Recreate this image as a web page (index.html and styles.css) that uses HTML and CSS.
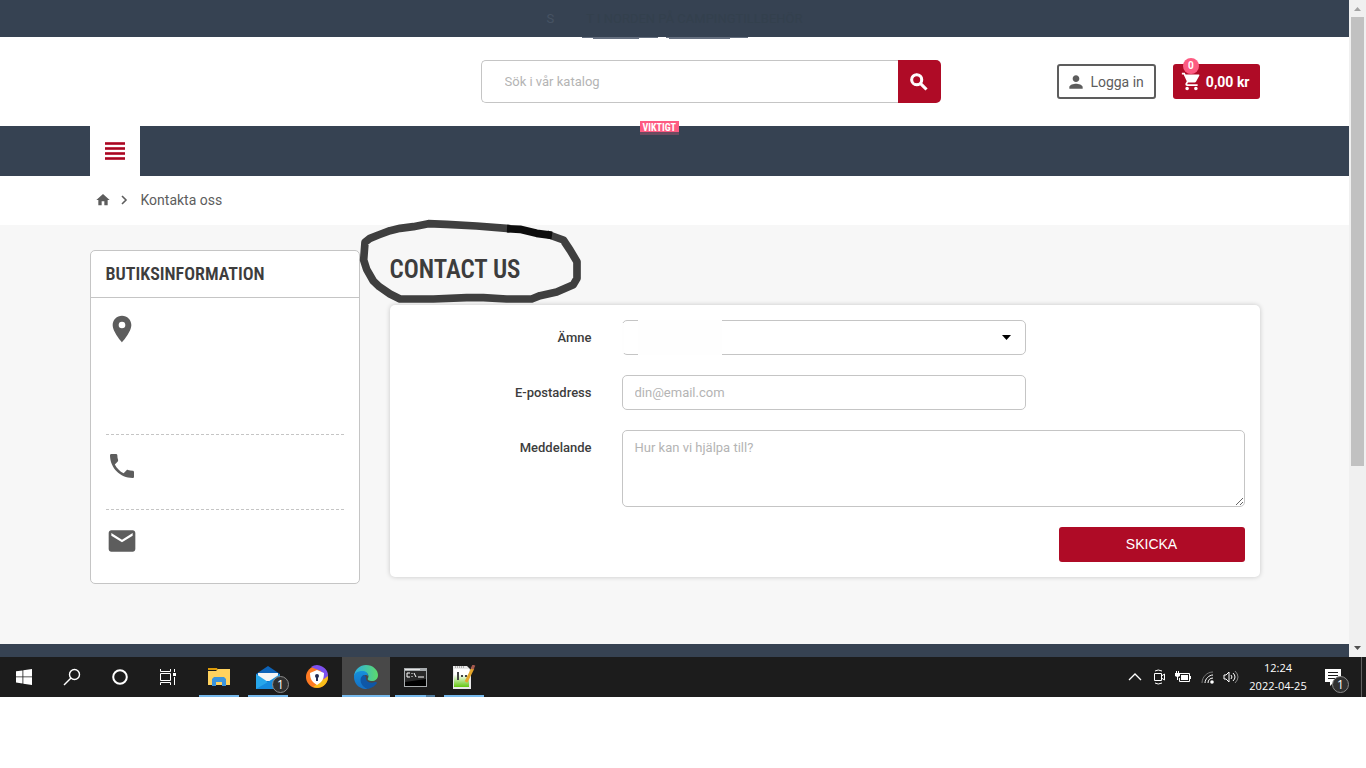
FILE: index.html
```html
<!DOCTYPE html>
<html lang="sv">
  <head>
    <meta charset="UTF-8" />
    <meta name="viewport" content="width=device-width, initial-scale=1.0" />
    <title>Kontakta oss</title>
    <link rel="stylesheet" href="styles.css">
  </head>
  <body>
    <div class="browser">
      <div class="page">
        <div class="banner">
          <span class="banner-first">S</span>
          <span class="banner-text">T I NORDEN PÅ CAMPINGTILLBEHÖR</span>
          <svg class="banner-marks" width="166" height="2" viewBox="0 0 166 2">
            <path d="M0 0h76v1H57v1H11V1H0zM84 0h82v1h-18v1H87V1h-3z" fill="#667080" />
          </svg>
        </div>

        <header class="header">
          <div class="container header-row">
            <form class="search">
              <input class="search-input" type="text" placeholder="Sök i vår katalog" aria-label="Sök" />
              <button class="search-button" type="button" aria-label="Sök">
                <svg width="22" height="22" viewBox="0 0 24 24">
                  <path d="M15.500 14h-.79l-.28-.27A6.470 6.470 0 0 0 16 9.500 6.500 6.500 0 1 0 9.500 16c1.610 0 3.090-.59 4.230-1.570l.27.28v.79l5 4.990L20.490 19l-4.990-5zm-6 0a4.500 4.500 0 1 1 0-9 4.500 4.500 0 0 1 0 9z" fill="#fff" stroke="#fff" stroke-width="1.300" />
                </svg>
              </button>
            </form>
            <div class="actions">
              <a class="login" href="#">
                <svg width="20" height="20" viewBox="0 0 24 24">
                  <path d="M12 12c2.210 0 4-1.790 4-4s-1.790-4-4-4-4 1.790-4 4 1.790 4 4 4zm0 2c-2.670 0-8 1.340-8 4v2h16v-2c0-2.660-5.330-4-8-4z" fill="#5d5d5d" />
                </svg>
                Logga in
              </a>
              <a class="cart" href="#">
                <svg width="21" height="21" viewBox="0 0 24 24">
                  <path d="M7 18c-1.100 0-1.990.9-1.990 2S5.900 22 7 22s2-.9 2-2-.9-2-2-2zM1 2v2h2l3.600 7.590-1.350 2.450c-.16.28-.25.61-.25.96 0 1.100.9 2 2 2h12v-2H7.420c-.14 0-.25-.11-.25-.25l.03-.12.9-1.630h7.450c.75 0 1.410-.41 1.750-1.030l3.580-6.490A1 1 0 0 0 20 4H5.210l-.94-2H1zm16 16c-1.100 0-1.990.9-1.990 2s.89 2 1.990 2 2-.9 2-2-.9-2-2-2z" fill="#fff" />
                </svg>
                0,00 kr
                <span class="cart-count">0</span>
              </a>
            </div>
          </div>
        </header>

        <nav class="nav">
          <div class="container nav-row">
            <button class="menu-button" type="button" aria-label="Meny">
              <svg width="22" height="20" viewBox="0 0 22 20">
                <path d="M1 1h20v3H1zM1 6h20v3H1zM1 11h20v3H1zM1 16h20v3H1z" fill="#c0334b" />
                <path d="M1 2h20v1H1zM1 7h20v1H1zM1 12h20v1H1zM1 17h20v1H1z" fill="#a40822" />
              </svg>
            </button>
            <span class="nav-label">VIKTIGT</span>
          </div>
        </nav>

        <div class="breadcrumb">
          <div class="container breadcrumb-row">
            <a class="home" href="#" aria-label="Hem">
              <svg width="16" height="16" viewBox="0 0 24 24">
                <path d="M10 20v-6h4v6h5v-8h3L12 3 2 12h3v8z" fill="#5d5d5d" />
              </svg>
            </a>
            <svg width="7" height="10" viewBox="0 0 7 10">
              <path d="M1 1l4 4-4 4" fill="none" stroke="#5d5d5d" stroke-width="1.600" />
            </svg>
            <span class="crumb">Kontakta oss</span>
          </div>
        </div>

        <main class="main">
          <div class="container columns">
            <aside class="store">
              <h2 class="store-title">Butiksinformation</h2>
              <div class="store-list">
                <div class="store-item store-address">
                  <svg width="32" height="32" viewBox="0 0 24 24">
                    <path d="M12 2C8.130 2 5 5.130 5 9c0 5.250 7 13 7 13s7-7.750 7-13c0-3.870-3.130-7-7-7zm0 9.500a2.500 2.500 0 1 1 0-5 2.500 2.500 0 0 1 0 5z" fill="#5d5d5d" />
                  </svg>
                </div>
                <div class="store-item">
                  <svg width="32" height="32" viewBox="0 0 24 24">
                    <path d="M6.620 10.790c1.440 2.830 3.760 5.140 6.590 6.590l2.200-2.200c.27-.27.67-.36 1.020-.24 1.120.37 2.330.57 3.570.57.55 0 1 .45 1 1V20c0 .55-.45 1-1 1C10.610 21 3 13.390 3 4c0-.55.45-1 1-1h3.500c.55 0 1 .45 1 1 0 1.250.2 2.450.57 3.570.11.35.03.74-.25 1.020l-2.200 2.200z" fill="#5d5d5d" />
                  </svg>
                </div>
                <div class="store-item">
                  <svg width="32" height="32" viewBox="0 0 24 24">
                    <path d="M20 4H4c-1.100 0-1.990.9-1.990 2L2 18c0 1.100.9 2 2 2h16c1.100 0 2-.9 2-2V6c0-1.100-.9-2-2-2zm0 4l-8 5-8-5V6l8 5 8-5v2z" fill="#5d5d5d" />
                  </svg>
                </div>
              </div>
            </aside>

            <section class="contact">
              <div class="contact-head">
                <h1 class="contact-title">Contact us</h1>
                <svg class="pen-circle" width="260" height="110" viewBox="0 0 780 330">
                  <g fill="none" stroke-width="23" stroke-linejoin="round">
                    <path d="M480 56L380 48 290 43 235 41 190 50 150 55 120 62 85 75 60 85 45 97 41 150 50 178 70 213 88 230 120 252 150 267 250 267 350 263 400 263 470 267 545 267 570 257 620 246 670 224 681 205 681 155 660 120 640 90 590 72" stroke="#3f3f3f" />
                    <path d="M471 56L510 58 560 70 606 76" stroke="#0d0d0d" />
                  </g>
                </svg>
              </div>
              <form class="card">
                <div class="row">
                  <label for="subject">Ämne</label>
                  <div class="select-wrap">
                    <select class="field" id="subject"><option></option></select>
                    <svg class="caret" width="9" height="5" viewBox="0 0 9 5"><path d="M0 0h9L4.500 5z" fill="#000" /></svg>
                  </div>
                </div>
                <div class="row">
                  <label for="email">E-postadress</label>
                  <input class="field short" id="email" type="email" placeholder="din@email.com" />
                </div>
                <div class="row">
                  <label for="message">Meddelande</label>
                  <textarea class="field message" id="message" placeholder="Hur kan vi hjälpa till?"></textarea>
                </div>
                <button class="send" type="button">SKICKA</button>
              </form>
            </section>
          </div>
        </main>
        <footer class="footer"></footer>
      </div>

      <div class="scrollbar">
        <svg width="17" height="17" viewBox="0 0 17 17"><path d="M5 11h7L8.500 7z" fill="#a3a3a3" /></svg>
        <div class="track"><div class="thumb"></div></div>
        <svg width="17" height="17" viewBox="0 0 17 17"><path d="M5 6h7l-3.500 4z" fill="#505050" /></svg>
      </div>
    </div>

    <div class="taskbar">
      <div class="system-buttons">
        <button class="task" type="button" aria-label="Start">
          <svg width="16" height="16" viewBox="0 0 16 16"><path d="M0 2.300L6.500 1.400V7.500H0zM7.300 1.300L16 0v7.500H7.300zM0 8.300h6.500v6.200L0 13.600zM7.300 8.300H16V16l-8.700-1.300z" fill="#fff" /></svg>
        </button>
        <button class="task" type="button" aria-label="Sök">
          <svg width="18" height="18" viewBox="0 0 18 18"><g fill="none" stroke="#fff" stroke-width="1.400"><circle cx="11.500" cy="6.500" r="5" /><path d="M8 10L1 17" /></g></svg>
        </button>
        <button class="task" type="button" aria-label="Cortana">
          <svg width="18" height="18" viewBox="0 0 18 18"><circle cx="9" cy="9" r="6.800" fill="none" stroke="#fff" stroke-width="2" /></svg>
        </button>
        <button class="task" type="button" aria-label="Aktivitetsvy">
          <svg width="18" height="16" viewBox="0 0 18 16"><g fill="none" stroke="#fff"><path d="M1.500 0v2.500h10V0M1.500 16v-2.500h10V16M1.500 4.500h10v7h-10zM15.500 0v3M15.500 8v8" /></g><path d="M14 4h3v3h-3z" fill="#fff" /></svg>
        </button>
      </div>

      <div class="app-buttons">
        <button class="task running" type="button" aria-label="Utforskaren">
          <svg width="22" height="18" viewBox="0 0 22 18"><path d="M0 0h9l1 2H0z" fill="#dc9a08" /><path d="M0 3h8l2-2h12v16H0z" fill="#ffd25e" /><path d="M4 18v-7l2-2h10l2 2v7h-4v-4H8v4z" fill="#3b94dc" /></svg>
        </button>
        <button class="task running" type="button" aria-label="E-post">
          <svg width="24" height="23" viewBox="0 0 24 23"><path d="M0 8L12 0l12 8v15H0z" fill="#0d63b8" /><path d="M2 7h20v8H2z" fill="#f4f4f4" /><path d="M0 8l12 8L24 8v15H0z" fill="#27a6ea" /><path d="M0 23L24 9v14z" fill="#168bdd" /></svg>
          <span class="mail-count">1</span>
        </button>
        <button class="task" type="button" aria-label="VPN">
          <svg width="24" height="24" viewBox="0 0 24 24"><circle cx="12" cy="12" r="11" fill="#ff7a22" /><path d="M6 2a11 11 0 0 1 17 10l-4 3L16 6z" fill="#7c50ef" /><path d="M23 11A11 11 0 0 1 8 22l4-3 7-5z" fill="#f7bd19" /><path d="M5 8l7-3 7 3c0 6-2 9-7 12-5-3-7-6-7-12z" fill="#fff" /><circle cx="12" cy="11" r="2" fill="#252d54" /><path d="M11 11h2v5h-2z" fill="#252d54" /></svg>
        </button>
        <button class="task running active" type="button" aria-label="Edge">
          <svg width="24" height="24" viewBox="0 0 24 24">
            <defs>
              <linearGradient id="edgeTop"><stop stop-color="#2baee5" /><stop offset="1" stop-color="#5ddb6b" /></linearGradient>
              <linearGradient id="edgeLeft" x2="0" y2="1"><stop stop-color="#1690dc" /><stop offset="1" stop-color="#146fc4" /></linearGradient>
            </defs>
            <path d="M0 11C1 4 6 0 12 0c7 0 12 5 12 10 0 4-3 6-6 6-3 0-5-1-4-3 1-1 1-6-5-6-4 0-7 2-9 4z" fill="url(#edgeTop)" />
            <path d="M0 12c0-4 4-6 8-6 4 0 6 2 6 5-1-1-5-2-6 2-1 5 2 9 6 11C6 25 0 19 0 12z" fill="url(#edgeLeft)" />
            <path d="M10 10c-5 1-5 11 4 14 4-1 7-3 9-6 0-1-1-1-2-1-5 2-10-1-9-5z" fill="#0f57a6" />
          </svg>
        </button>
        <button class="task running grouped" type="button" aria-label="Kommandotolken">
          <svg width="23" height="19" viewBox="0 0 23 19"><path d="M0 0h23v19H0z" fill="#a8acae" /><path d="M1 3h21v15H1z" fill="#000" /><path d="M1 1h15v1H1z" fill="#e5e5e5" /><path d="M1 3h21v8L1 14z" fill="#292929" /><path d="M6 5H3v4h3M8 5v1M8 8v1M10 5l2 4M14 9h6" fill="none" stroke="#fff" /></svg>
        </button>
        <button class="task running" type="button" aria-label="Notepad++">
          <svg width="24" height="24" viewBox="0 0 24 24"><defs><linearGradient id="padFill" x2="0" y2="1"><stop offset="0.300" stop-color="#fff" /><stop offset="1" stop-color="#64c810" /></linearGradient></defs><path d="M1 1h14l4 4v19H1z" fill="#e8e8e8" /><path d="M2 4h15v18H2z" fill="url(#padFill)" /><path d="M3 2h10" stroke="#777" stroke-dasharray="1 1" /><path d="M5 7h2v8H5zM9 10h2v2H9zM13 10h2v2h-2z" fill="#444" /><path d="M14 17L21 3" stroke="#e4a52b" stroke-width="3" /><path d="M20 4l2-4" stroke="#a45a50" stroke-width="3" /></svg>
        </button>
      </div>

      <div class="tray">
        <span class="tray-icon"><svg width="14" height="8" viewBox="0 0 14 8"><path d="M1 7l6-6 6 6" fill="none" stroke="#fff" stroke-width="1.300" /></svg></span>
        <span class="tray-icon"><svg width="13" height="16" viewBox="0 0 13 16"><path d="M1.500 4.500h7v7h-7zM8.500 7l3-2v6l-3-2M2 2Q5 0 9 2M2 14q3 2 7 0" fill="none" stroke="#fff" /></svg></span>
        <span class="tray-icon"><svg width="16" height="12" viewBox="0 0 16 12"><path d="M5 2.500h9.500v8H4.500V7" fill="none" stroke="#fff" /><path d="M6 4h7v5H6zM15 5h1v3h-1zM0 2h5v3L3 6v3H2V6L0 5zM1 0h1v2H1zM3 0h1v2H3z" fill="#fff" /></svg></span>
        <span class="tray-icon"><svg width="13" height="13" viewBox="0 0 13 13"><g fill="none" stroke="#fff"><path d="M1 12C1 6 6 1 12 1" stroke="#777" /><path d="M4 12c0-4 4-8 8-8M7 12c0-3 2-5 5-5" /></g><circle cx="11" cy="11" r="1.800" fill="#fff" /></svg></span>
        <span class="tray-icon"><svg width="16" height="14" viewBox="0 0 16 14"><g fill="none" stroke="#fff"><path d="M1 5h2l3-3v10L3 9H1zM8 5q2 2 0 4M10 3q4 4 0 8" /><path d="M12 1q6 6 0 12" stroke="#888" /></g></svg></span>
        <div class="clock">
          <time>12:24</time>
          <time>2022-04-25</time>
        </div>
        <button class="notices" type="button" aria-label="Meddelanden">
          <svg width="16" height="17" viewBox="0 0 16 17"><path d="M0 0h16v13H9l-4 4v-4H0z" fill="#fff" /><path d="M3 3.500h10M3 6.500h10M3 9.500h7" stroke="#1c1c1c" /></svg>
          <span class="notice-count">1</span>
        </button>
      </div>
    </div>
  </body>
</html>
```
FILE: styles.css
```css
* {
  margin: 0;
  padding: 0;
  box-sizing: border-box;
}

body {
  font-family: Roboto, "Liberation Sans", sans-serif;
  font-size: 14px;
  line-height: 20px;
  color: #5d5d5d;
  background-color: #fff;
}
button {
  border: none;
  cursor: pointer;
}
a {
  color: inherit;
  text-decoration: none;
}
svg {
  display: block;
  flex-shrink: 0;
}
.browser {
  display: flex;
}
.page {
  flex: 1;
  min-width: 0;
}
.container {
  max-width: 1170px;
  margin: 0 auto;
}

/* top of the page */
.banner {
  position: relative;
  display: flex;
  justify-content: center;
  align-items: center;
  gap: 32px;
  height: 37px;
  font-size: 13px;
  background-color: #364252;
}
.banner-first {
  color: #465363;
}
.banner-text {
  color: #33404d;
}
.banner-marks {
  position: absolute;
  top: 100%;
  left: 582px;
}
.header {
  padding: 23px 0;
}
.header-row {
  display: grid;
  grid-template-columns: 460px auto;
  justify-content: space-between;
  align-items: center;
  padding-left: 391px;
}
.search {
  display: flex;
  height: 43px;
}
.search-input {
  flex: 1;
  min-width: 0;
  padding: 0 23px;
  border: 1px solid #c5c5c5;
  border-right: none;
  border-radius: 5px 0 0 5px;
  font: 13px Roboto, sans-serif;
}
::placeholder {
  color: #b4b4b4;
}
.search-button {
  display: flex;
  justify-content: center;
  align-items: center;
  width: 43px;
  border-radius: 0 5px 5px 0;
  background-color: #af0b26;
}
.actions {
  display: flex;
  gap: 17px;
}
.login,
.cart {
  display: flex;
  align-items: center;
  height: 35px;
  border-radius: 3px;
}
.login {
  gap: 4px;
  padding: 0 10px 0 7px;
  border: 2px solid #5d5d5d;
}
.cart {
  position: relative;
  gap: 4px;
  padding: 0 10px 0 8px;
  font-weight: 700;
  color: #fff;
  background-color: #af0b26;
}
.cart-count {
  position: absolute;
  top: -6px;
  left: 10px;
  width: 16px;
  border-radius: 50%;
  font-size: 10px;
  line-height: 16px;
  text-align: center;
  background-color: #fd5b82;
}
.nav {
  background-color: #364252;
}
.nav-row {
  position: relative;
}
.menu-button {
  display: flex;
  justify-content: center;
  align-items: center;
  width: 50px;
  height: 50px;
  background-color: #fff;
}
.nav-label {
  position: absolute;
  top: -5px;
  left: 550px;
  padding: 0 3px;
  font-family: "Roboto Condensed", Roboto, sans-serif;
  font-size: 10px;
  font-weight: 700;
  line-height: 14px;
  color: #fff;
  background: linear-gradient(#fd5b82 11px, #6b4b60 11px);
}
.breadcrumb-row {
  display: flex;
  align-items: center;
  gap: 10px;
  height: 48px;
  padding-left: 5px;
}
.breadcrumb {
  padding-bottom: 1px;
}
.crumb {
  padding-left: 3px;
}

/* content */
.main {
  padding: 25px 0 60px;
  background-color: #f7f7f7;
}
.columns {
  display: grid;
  grid-template-columns: 270px 1fr;
  align-items: start;
  gap: 30px;
}
.store {
  border: 1px solid #c5c5c5;
  border-radius: 5px;
  background-color: #fff;
}
.store-title,
.contact-title {
  font-family: "Roboto Condensed", "Liberation Sans Narrow", Roboto, sans-serif;
  font-weight: 600;
  text-transform: uppercase;
  color: #3d3d3d;
}
.store-title {
  padding: 13px 15px;
  border-bottom: 1px solid #c5c5c5;
  font-size: 18px;
  line-height: 20px;
}
.store-list {
  padding: 0 15px;
}
.store-item {
  min-height: 75px;
  padding: 15px 0;
}
.store-item + .store-item {
  border-top: 1px dashed #c5c5c5;
}
.store-item:last-child {
  min-height: 74px;
}
.store-address {
  min-height: 136px;
}
.contact-head {
  position: relative;
  padding-bottom: 15px;
}
.contact-title {
  font-size: 25px;
  line-height: 40px;
}
.pen-circle {
  position: absolute;
  top: -40px;
  left: -40px;
}
.card {
  display: flex;
  flex-direction: column;
  gap: 20px;
  padding: 15px;
  border-radius: 5px;
  background-color: #fff;
  box-shadow: 0 0 5px rgba(0, 0, 0, 0.2);
}
.row {
  display: grid;
  grid-template-columns: 187px 1fr;
  align-items: start;
  gap: 30px;
}
.row label {
  font-size: 13px;
  font-weight: 500;
  line-height: 35px;
  text-align: right;
  color: #3d3d3d;
}
.field {
  display: block;
  width: 100%;
  height: 35px;
  padding: 0 12px;
  border: 1px solid #c5c5c5;
  border-radius: 5px;
  font: 13px/20px Roboto, sans-serif;
  background-color: #fff;
}
.short,
.select-wrap {
  width: 65%;
}
.select-wrap {
  position: relative;
}
.select-wrap select {
  appearance: none;
}
/* worn part of the border */
.select-wrap::before,
.select-wrap::after {
  content: "";
  position: absolute;
  background-color: #fefefe;
}
.select-wrap::before {
  top: 3px;
  bottom: 2px;
  left: 0;
  width: 2px;
}
.select-wrap::after {
  top: 0;
  bottom: 0;
  left: 16px;
  width: 84px;
}
.caret {
  position: absolute;
  top: 15px;
  right: 15px;
}
.message {
  height: 77px;
  padding: 7px 12px;
}
.send {
  align-self: flex-end;
  width: 186px;
  height: 35px;
  padding-bottom: 2px;
  border-radius: 3px;
  font: 14px "Liberation Sans", Arial, sans-serif;
  color: #fff;
  background-color: #af0b26;
}
.footer {
  height: 13px;
  background-color: #364252;
}

/* scrollbar */
.scrollbar {
  display: flex;
  flex-direction: column;
  width: 17px;
  background-color: #f0f0f0;
}
.track {
  flex: 1;
  padding: 0 2px;
}
.thumb {
  height: 72%;
  background-color: #c1c1c1;
}

/* taskbar */
.taskbar {
  display: flex;
  height: 40px;
  color: #fff;
  background-color: #1c1c1c;
}
.system-buttons,
.app-buttons,
.tray {
  display: flex;
}
.app-buttons {
  gap: 1px;
  padding-left: 3px;
}
.task {
  position: relative;
  display: flex;
  justify-content: center;
  align-items: center;
  width: 48px;
  height: 40px;
  color: #fff;
  background-color: transparent;
}
.running::after {
  content: "";
  position: absolute;
  right: 4px;
  bottom: 0;
  left: 4px;
  height: 2px;
  background-color: #76b9ed;
}
.active {
  background-color: #484848;
}
.active::after {
  right: 0;
  left: 0;
}
.grouped::after {
  background: linear-gradient(90deg, #76b9ed 31px, #527da0 31px);
}
.mail-count,
.notice-count {
  position: absolute;
  width: 17px;
  height: 17px;
  border: 1px solid #8a8a8a;
  border-radius: 50%;
  font: 12px/15px "Open Sans", sans-serif;
  text-align: center;
  color: #fff;
  background-color: #303030;
}
.mail-count {
  right: 3px;
  bottom: 4px;
}
.tray {
  align-items: center;
  margin-left: auto;
  padding-right: 4px;
}
.tray-icon {
  display: flex;
  justify-content: center;
  width: 24px;
}
.clock {
  display: flex;
  flex-direction: column;
  width: 70px;
  font: 11px/18px "Open Sans", sans-serif;
  text-align: center;
}
.notices {
  position: relative;
  display: flex;
  justify-content: center;
  align-items: center;
  width: 49px;
  height: 40px;
  padding-right: 8px;
  border-right: 1px solid #606060;
  background-color: transparent;
}
.notice-count {
  right: 12px;
  bottom: 4px;
}
```
